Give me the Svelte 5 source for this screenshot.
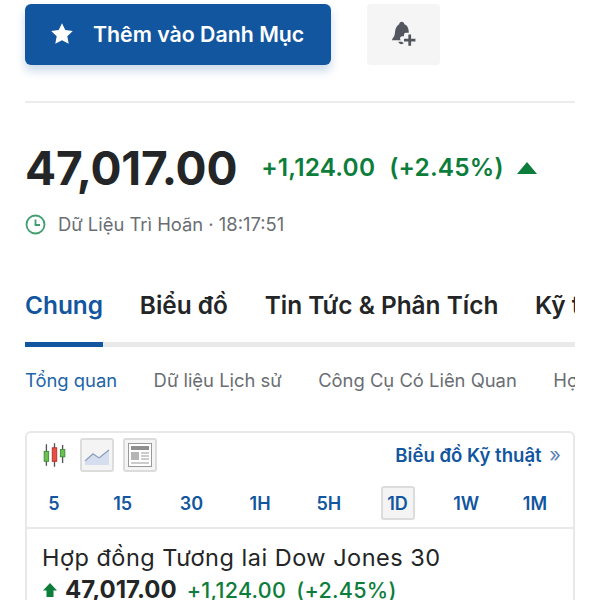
<script lang="ts">
	const tabs = ['Biểu đồ', 'Tin Tức & Phân Tích', 'Kỹ thuật'];
	const subTabs = ['Dữ liệu Lịch sử', 'Công Cụ Có Liên Quan', 'Hợp đồng'];
	const periods = ['5', '15', '30', '1H', '5H', '1D', '1W', '1M'];
</script>

<main class="page">
	<div class="actions">
		<button class="watch" type="button">
			<svg width="24" height="24" viewBox="0 0 24 24" aria-hidden="true">
				<path fill="#fff" d="M12 1.200l3.300 6.900 7.500 1-5.500 5.200 1.400 7.500L12 18.200l-6.700 3.600 1.400-7.500L1.200 9.100l7.500-1z" />
			</svg>
			<span>Thêm vào Danh Mục</span>
		</button>
		<button class="alert" type="button" aria-label="Thêm cảnh báo">
			<svg width="32" height="32" viewBox="0 0 28 28" aria-hidden="true">
				<path fill="#53565f" d="M12 2.500c1.300 0 2.200.9 2.300 2.100 2.700 1 3.700 3.300 3.800 6l.1 1.400h-2.700a1.500 1.500 0 0 0-1.500 1.500V15h-1.500a2 2 0 0 0-1.600 3.200l.3.300H3.500c0-1.300 1.800-2.500 2.300-4.500.6-2.500.1-7.100 4-9.400.1-1.200 1-2.100 2.200-2.100z" />
				<path fill="#53565f" d="M9 19.800h3.200c.5.500 1 1 1.600 1.200-.5.700-1.100 1-2 1-1.300 0-2.300-1-2.800-2.200z" />
				<path fill="none" stroke="#53565f" stroke-width="2.400" d="M19 13.500v10M14 18.500h10" />
			</svg>
		</button>
	</div>

	<hr class="rule" />

	<div class="quote">
		<span class="last">47,017.00</span>
		<span class="change">+1,124.00</span>
		<span class="change">(+2.45%)</span>
		<span class="up-triangle"></span>
	</div>

	<div class="delay">
		<svg width="21" height="21" viewBox="0 0 21 21" aria-hidden="true">
			<circle cx="10.500" cy="10.500" r="9" fill="none" stroke="#3f9d6e" stroke-width="1.800" />
			<path fill="none" stroke="#3f9d6e" stroke-width="1.800" d="M10.500 5.500v5.500h4.500" />
		</svg>
		<span>Dữ Liệu Trì Hoãn · 18:17:51</span>
	</div>

	<nav class="tabs">
		<span class="tab active">Chung</span>
		{#each tabs as tab}
			<span class="tab">{tab}</span>
		{/each}
	</nav>

	<nav class="subtabs">
		<span class="subtab active">Tổng quan</span>
		{#each subTabs as tab}
			<span class="subtab">{tab}</span>
		{/each}
	</nav>

	<section class="card">
		<div class="toolbar">
			<div class="chart-types">
				<svg class="candles" width="27" height="28" viewBox="0 0 30 28" aria-hidden="true">
					<path stroke="#555" stroke-width="1.500" d="M6 2v24M15 1v26M24 3v20" />
					<rect x="3.500" y="10" width="5" height="11" fill="#6cc04f" stroke="#3c8a37" />
					<rect x="12.500" y="6" width="5" height="15" fill="#ee4c43" stroke="#a8322c" />
					<rect x="21.500" y="8" width="5" height="8" fill="#6cc04f" stroke="#3c8a37" />
				</svg>
				<span class="type-btn">
					<svg width="28" height="28" viewBox="0 0 28 28" aria-hidden="true">
						<path fill="#d5deef" d="M2 21l8-7 6 4 10-9v15H2z" />
						<path fill="none" stroke="#8da0c0" stroke-width="1.400" d="M2 20l8-7 6 4 10-8" />
					</svg>
				</span>
				<span class="type-btn">
					<svg width="28" height="28" viewBox="0 0 28 28" aria-hidden="true">
						<rect x="2.500" y="2.500" width="23" height="23" fill="#fff" stroke="#999" />
						<rect x="5" y="5" width="18" height="4" fill="#8f8f8f" />
						<rect x="5" y="11" width="8" height="8" fill="#b5b5b5" />
						<path stroke="#999" stroke-width="1.200" d="M15 12h8M15 15h8M15 18h8M5 22h18" />
					</svg>
				</span>
			</div>
			<span class="tech-link">Biểu đồ Kỹ thuật <i>»</i></span>
		</div>

		<div class="periods">
			{#each periods as period}
				<span class="period" class:selected={period === '1D'}>{period}</span>
			{/each}
		</div>

		<div class="instrument">
			<div class="name">Hợp đồng Tương lai Dow Jones 30</div>
			<div class="mini-quote">
				<svg width="16" height="16" viewBox="0 0 16 16" aria-hidden="true">
					<path fill="#0c7d3a" d="M8 1l7 7.500h-3.500V15h-7V8.500H1z" />
				</svg>
				<span class="mini-last">47,017.00</span>
				<span class="mini-change">+1,124.00</span>
				<span class="mini-change">(+2.45%)</span>
			</div>
		</div>
	</section>
</main>

<style>
	:global(body) {
		margin: 0;
		background: #fff;
	}

	.page {
		box-sizing: border-box;
		width: 600px;
		height: 600px;
		padding: 4px 25px 0;
		overflow: hidden;
		font-family: Inter, 'Liberation Sans', sans-serif;
		color: #232526;
	}

	.actions {
		display: flex;
		gap: 36px;
	}

	.watch {
		display: flex;
		align-items: center;
		gap: 19px;
		width: 306px;
		height: 61px;
		padding: 0 25px 1px;
		border: none;
		border-radius: 6px;
		background: #1256a0;
		box-shadow: 0 6px 10px rgba(18, 86, 160, 0.22);
		color: #fff;
		font: 600 21.3px Inter, sans-serif;
		white-space: nowrap;
	}

	.alert {
		display: flex;
		align-items: center;
		justify-content: center;
		width: 73px;
		height: 61px;
		padding: 0;
		border: none;
		border-radius: 4px;
		background: #f5f5f6;
	}

	.rule {
		height: 2px;
		margin: 36px 0 0;
		border: none;
		background: #ececec;
	}

	.quote {
		display: flex;
		align-items: center;
		margin-top: 37px;
		height: 56px;
		color: #0c7d3a;
	}

	.last {
		margin-right: 24px;
		color: #232526;
		font-size: 46px;
		font-weight: 700;
		letter-spacing: -0.2px;
	}

	.change {
		margin: 0 14px 2px 0;
		font-size: 24.4px;
		font-weight: 600;
		letter-spacing: 0.2px;
	}

	.up-triangle {
		width: 0;
		height: 0;
		margin-left: -1px;
		border-left: 10px solid transparent;
		border-right: 10px solid transparent;
		border-bottom: 12px solid #0c7d3a;
	}

	.delay {
		display: flex;
		align-items: center;
		gap: 12px;
		margin-top: 17px;
		color: #6a6e73;
		font-size: 18.4px;
	}

	.tabs {
		display: flex;
		gap: 36.8px;
		height: 67px;
		margin-top: 45px;
		background: linear-gradient(#e9e9ea, #e9e9ea) bottom / 100% 5px no-repeat;
		overflow: hidden;
		font-size: 24.4px;
		font-weight: 600;
		white-space: nowrap;
	}

	.tab {
		position: relative;
		flex: none;
		padding-top: 10px;
	}

	.tab.active {
		color: #1256a0;
	}

	.tab.active::after {
		content: '';
		position: absolute;
		left: 0;
		right: 0;
		bottom: 0;
		height: 5px;
		background: #1256a0;
	}

	.subtabs {
		display: flex;
		gap: 36.5px;
		margin-top: 22px;
		height: 26px;
		overflow: hidden;
		color: #6a6e73;
		font-size: 18.4px;
		white-space: nowrap;
	}

	.subtab {
		flex: none;
	}

	.subtab.active {
		color: #1c65a8;
	}

	.card {
		box-sizing: border-box;
		height: 200px;
		margin-top: 36px;
		border: 2px solid #e8e8e8;
		border-bottom: none;
		border-radius: 6px 6px 0 0;
	}

	.toolbar {
		display: flex;
		align-items: center;
		justify-content: space-between;
		height: 44px;
		padding: 0 12px 0 14px;
	}

	.chart-types {
		display: flex;
		align-items: center;
		gap: 9px;
	}

	.candles {
		margin-right: 3px;
	}

	.type-btn {
		display: flex;
		box-sizing: border-box;
		width: 34px;
		height: 34px;
		padding: 1px;
		border: 2px solid #dcdcdc;
		border-radius: 3px;
		background: #f4f4f4;
	}

	.tech-link {
		color: #1256a0;
		font-size: 18.6px;
		font-weight: 600;
	}

	.tech-link i {
		margin-left: 3px;
		color: #5b82b8;
		font-style: normal;
		font-weight: 400;
		font-size: 20px;
	}

	.periods {
		display: flex;
		justify-content: space-between;
		align-items: center;
		height: 52px;
		padding: 2px 21px 0 10px;
		border-bottom: 2px solid #e8e8e8;
		box-sizing: border-box;
		color: #1256a0;
		font-size: 18px;
		font-weight: 600;
	}

	.period {
		display: flex;
		align-items: center;
		justify-content: center;
		box-sizing: border-box;
		width: 34px;
		height: 34px;
		border: 2px solid transparent;
		border-radius: 3px;
	}

	.period.selected {
		border-color: #dcdcdc;
		background: #f4f4f4;
	}

	.instrument {
		padding: 14px 15px 0;
	}

	.name {
		font-size: 23.5px;
		line-height: 30px;
		letter-spacing: 0.5px;
	}

	.mini-quote {
		display: flex;
		align-items: center;
		gap: 10px;
		margin-top: 2px;
		color: #0c7d3a;
		font-size: 21.5px;
		font-weight: 500;
	}

	.mini-quote svg {
		margin-right: -3px;
	}

	.mini-last {
		color: #232526;
		font-size: 24px;
		font-weight: 700;
	}

	.mini-change {
		letter-spacing: 0.3px;
	}
</style>
